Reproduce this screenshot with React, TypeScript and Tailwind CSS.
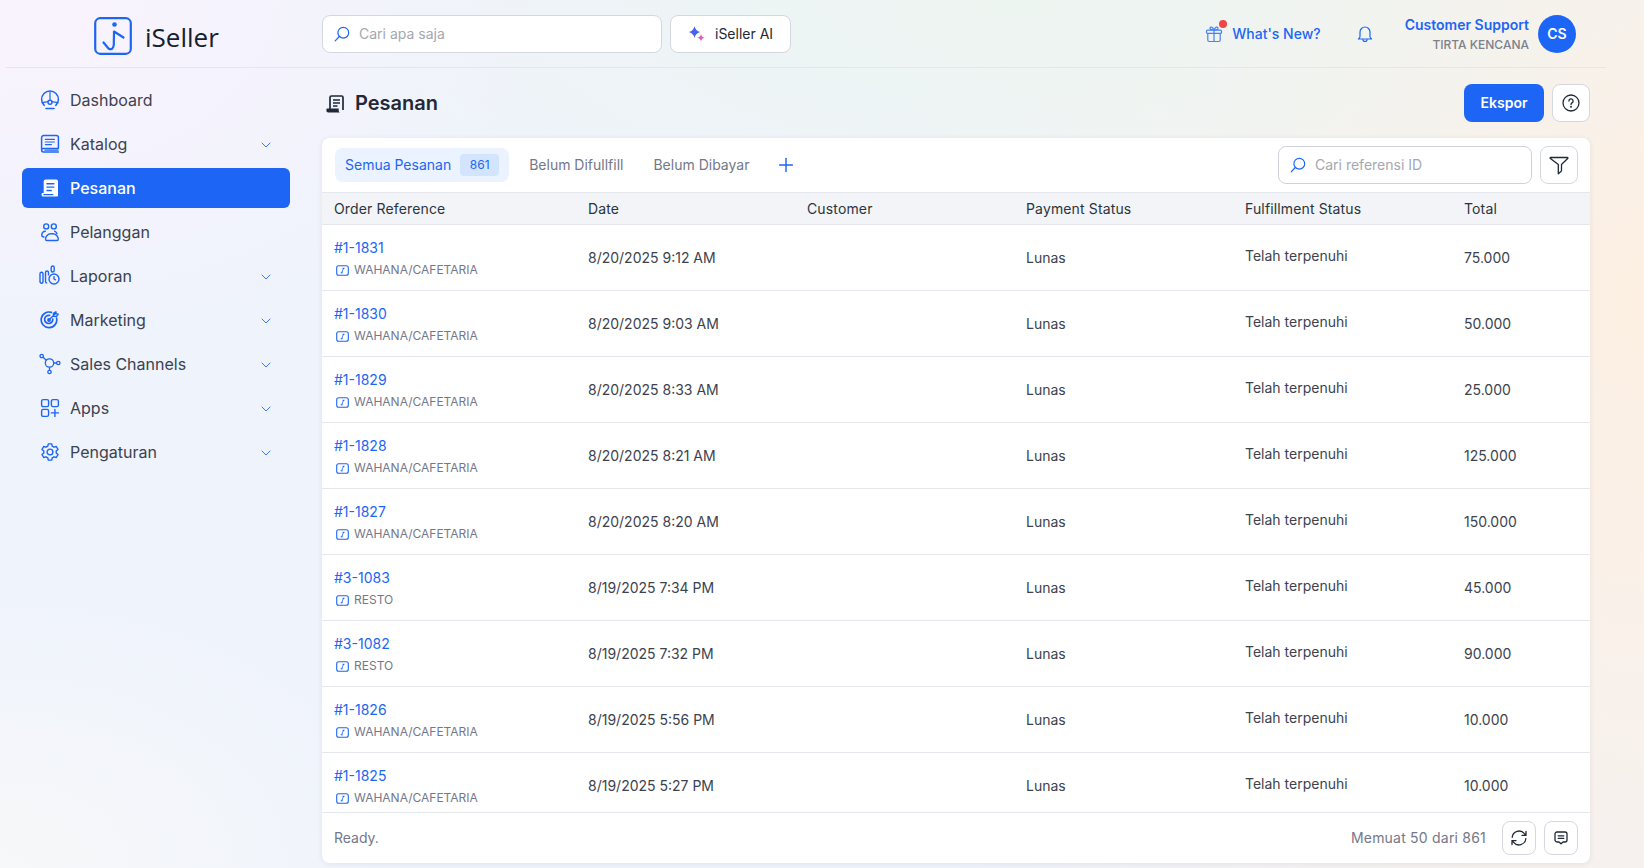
import { ChevronDown, Plus } from 'lucide-react'
import type { ReactNode } from 'react'

const BLUE = '#1d66f5'

function Ico({ children, size = 20, className = '' }: { children: ReactNode; size?: number; className?: string }) {
  return (
    <svg width={size} height={size} viewBox="0 0 20 20" fill="none" stroke="currentColor" strokeWidth={1.4} strokeLinecap="round" strokeLinejoin="round" className={`shrink-0 ${className}`}>
      {children}
    </svg>
  )
}

const NAV = [
  { label: 'Dashboard', icon: 'dash' },
  { label: 'Katalog', icon: 'book', more: true },
  { label: 'Pesanan', icon: 'order', active: true },
  { label: 'Pelanggan', icon: 'people' },
  { label: 'Laporan', icon: 'report', more: true },
  { label: 'Marketing', icon: 'target', more: true },
  { label: 'Sales Channels', icon: 'channels', more: true },
  { label: 'Apps', icon: 'apps', more: true },
  { label: 'Pengaturan', icon: 'gear', more: true },
]

const ORDERS = [
  ['#1-1831', 'WAHANA/CAFETARIA', '8/20/2025 9:12 AM', '75.000'],
  ['#1-1830', 'WAHANA/CAFETARIA', '8/20/2025 9:03 AM', '50.000'],
  ['#1-1829', 'WAHANA/CAFETARIA', '8/20/2025 8:33 AM', '25.000'],
  ['#1-1828', 'WAHANA/CAFETARIA', '8/20/2025 8:21 AM', '125.000'],
  ['#1-1827', 'WAHANA/CAFETARIA', '8/20/2025 8:20 AM', '150.000'],
  ['#3-1083', 'RESTO', '8/19/2025 7:34 PM', '45.000'],
  ['#3-1082', 'RESTO', '8/19/2025 7:32 PM', '90.000'],
  ['#1-1826', 'WAHANA/CAFETARIA', '8/19/2025 5:56 PM', '10.000'],
  ['#1-1825', 'WAHANA/CAFETARIA', '8/19/2025 5:27 PM', '10.000'],
]

function NavIcon({ name }: { name: string }) {
  switch (name) {
    case 'dash':
      return (
        <Ico>
          <path d="M4.2 15.4A8.4 8.4 0 1 1 15.8 15.4" strokeWidth={1.5} />
          <path d="M2.2 12.6 8 11.6M17.8 12.6 12 11.6M10 2v7.6" strokeWidth={1.2} />
          <circle cx="10" cy="12.2" r="2" />
          <path d="M6 18.4h8" strokeWidth={1.5} />
        </Ico>
      )
    case 'book':
      return (
        <Ico>
          <path d="M1.6 15.8V3.6a2 2 0 0 1 2-2h12.8a2 2 0 0 1 2 2v10.8H3.3a1.7 1.7 0 0 0-1.7 1.7 1.900 1.900 0 0 0 1.900 1.900h14.900" strokeWidth={1.5} />
          <path d="M5.4 5.4h9M5.4 8h9M5.4 10.600h6M5 16.200h13" strokeWidth={1.2} />
        </Ico>
      )
    case 'order':
      return (
        <svg width="20" height="20" viewBox="0 0 20 20" className="shrink-0">
          <path fill="currentColor" fillRule="evenodd" d="M5.5 1.5h10.700a1.800 1.800 0 0 1 1.800 1.800v14.400a.8.8 0 0 1-.8.8H3.200a1.600 1.600 0 0 1-1.600-1.600v-1.300c0-.4.300-.7.700-.7h1.400V3.300a1.800 1.800 0 0 1 1.800-1.800ZM6.400 5v1.400h8V5h-8Zm0 3.400v1.400h8V8.400h-8Zm0 3.400v1.400h5.400v-1.400H6.400ZM3.400 16v.9c0 .2.100.3.300.3h9.800a2 2 0 0 1-.3-1.200H3.400Z" />
        </svg>
      )
    case 'people':
      return (
        <Ico>
          <circle cx="6.2" cy="4.4" r="2.5" />
          <circle cx="13.8" cy="4.4" r="2.5" />
          <path d="M5.4 9.2A3.600 3.600 0 0 0 1.800 13c0 1.300 1 2 2.200 2" />
          <path d="M14.600 9.200c1.500.8 2.200 1.500 2.400 2.600" />
          <path d="M6.800 18.500h10.200c.8 0 1.300-.5 1.300-1.200 0-2.800-2.500-5.500-5.500-5.500h-2c-3 0-5.300 2.600-5.300 5.400 0 .7.400 1.300 1.300 1.300Z" />
        </Ico>
      )
    case 'report':
      return (
        <svg width="22" height="22" viewBox="0 0 22 22" fill="none" stroke="currentColor" strokeWidth={1.4} className="shrink-0 -ml-px">
          <rect x="1" y="7.2" width="3" height="11" rx="1.5" />
          <path d="M8.200 18c-1.100 0-1.700-.7-1.700-1.600V7.500C6.500 6.500 7.200 6 8 6s1.500.5 1.500 1.500v3" />
          <rect x="12.200" y="1" width="3" height="6" rx="1.5" />
          <circle cx="15" cy="14" r="5" />
          <path d="M15 11.300V14l1.800 1.200" />
        </svg>
      )
    case 'target':
      return (
        <Ico>
          <path d="M16.600 8.200a7.800 7.800 0 1 1-5.200-5.800" strokeWidth={1.7} />
          <path d="M12.800 9a4.100 4.100 0 1 1-3.200-3.600" strokeWidth={1.7} />
          <circle cx="9" cy="10" r="1.2" fill="currentColor" />
          <path d="m9.400 9.600 6-6M13.400 3.400l.2 2.900 2.900.2 1.700-2.400-2-.3-.3-2-2.500 1.600Z" />
        </Ico>
      )
    case 'channels':
      return (
        <svg width="22" height="22" viewBox="0 0 22 22" fill="none" stroke="currentColor" strokeWidth={1.3} className="shrink-0 -ml-px">
          <circle cx="10.5" cy="10" r="4.2" />
          <circle cx="2.7" cy="3" r="1.7" />
          <circle cx="19.3" cy="10" r="1.7" />
          <circle cx="10.5" cy="19" r="1.7" />
          <path d="m4 4.200 3.400 3M14.700 10h2.900M10.500 14.200v3.100" />
        </svg>
      )
    case 'apps':
      return (
        <Ico>
          <rect x="1.6" y="1.6" width="7" height="7" rx="1.6" />
          <rect x="11.4" y="1.6" width="7" height="7" rx="1.6" />
          <rect x="1.6" y="11.4" width="7" height="7" rx="1.6" />
          <path d="M14.900 11.400v7M11.400 14.900h7" />
        </Ico>
      )
    default:
      return (
        <Ico>
          <circle cx="10" cy="10" r="2.9" />
          <path d="M8.300 1.900h3.400l.5 2.300 1.800 1 2.300-.7 1.700 2.900-1.800 1.600v2l1.800 1.600-1.700 2.900-2.300-.7-1.800 1-.5 2.300H8.300l-.5-2.300-1.800-1-2.300.7-1.700-2.900 1.800-1.600V9L2 7.400l1.700-2.900 2.300.7 1.800-1 .5-2.300Z" />
        </Ico>
      )
  }
}

function SearchIcon() {
  return (
    <svg width="16" height="16" viewBox="0 0 16 16" fill="none" stroke={BLUE} strokeWidth={1.2} strokeLinecap="round" className="shrink-0">
      <circle cx="9.3" cy="6.7" r="5.4" />
      <path d="M5.300 10.500 1.200 14.800" />
    </svg>
  )
}

function ChannelTag() {
  return (
    <svg width="13" height="13" viewBox="0 0 13 13" fill="none" stroke={BLUE} className="shrink-0">
      <rect x="0.7" y="1.8" width="11.6" height="9.4" rx="2" strokeWidth={1.1} />
      <path d="M7.600 4.300 6.400 6.800l-.5 2M5 8.800h1.100M6.900 4.300h1.200" strokeWidth={0.9} strokeLinecap="round" />
    </svg>
  )
}

export default function App() {
  return (
    <div
      className="h-[868px] w-[1644px] overflow-hidden text-[#2b3440] bg-[radial-gradient(420px_280px_at_0%_100%,#f7f8f9,transparent),radial-gradient(560px_360px_at_0%_0%,#faf3fe,transparent),radial-gradient(760px_300px_at_62%_0%,#edf5f1,transparent),radial-gradient(780px_1200px_at_100%_35%,#fdf0e3,transparent),linear-gradient(#eff3fc,#eff3fc)]"
      style={{ fontFamily: 'Inter, "Liberation Sans", sans-serif' }}
    >
      <header className="ml-[6px] flex h-[68px] w-[1600px] items-center border-b border-[#e3e6ee]">
        <div className="mt-1 flex w-[316px] items-center pl-[88px]">
          <svg width="38" height="38" viewBox="0 0 38 38" fill="none" stroke={BLUE} className="shrink-0">
            <rect x="1.2" y="1.2" width="35.6" height="35.6" rx="5" strokeWidth={2.2} />
            <circle cx="20.5" cy="7.5" r="2.3" fill={BLUE} stroke="none" />
            <path d="M9.500 25.500 14.500 31.500C17.500 33.500 19.700 31 19.800 27.500L20 14.500 29.500 20.500" strokeWidth={2.2} strokeLinecap="round" strokeLinejoin="round" />
          </svg>
          <span className="ml-[13px] mt-[3px] text-[26px] font-medium leading-none text-[#15202e]" style={{ fontFamily: '"Open Sans", sans-serif' }}>iSeller</span>
        </div>
        <div className="flex h-[38px] w-[340px] items-center gap-[9px] rounded-lg border border-[#d5d7e0] bg-white pl-[11px]">
          <SearchIcon />
          <span className="text-sm text-[#a4a8b1]">Cari apa saja</span>
        </div>
        <div className="ml-2 flex h-[38px] w-[121px] items-center gap-[9px] rounded-lg border border-[#d5d7e0] bg-white pl-[17px] text-sm text-[#1f2937]">
          <svg width="18" height="18" viewBox="0 0 18 18" className="shrink-0">
            <path d="M6.500 1.200c.9 3.200 2.300 4.700 5.600 5.900-3.300 1.200-4.700 2.700-5.600 5.900-.9-3.200-2.300-4.700-5.600-5.900 3.300-1.200 4.700-2.700 5.600-5.900Z" fill="#4a63f0" />
            <path d="M13 9c.5 2.300 1.300 3.100 3.700 3.800-2.400.7-3.200 1.500-3.700 3.800-.5-2.300-1.300-3.100-3.700-3.800 2.400-.7 3.200-1.500 3.700-3.800Z" fill="#e25bb5" />
          </svg>
          iSeller AI
        </div>
        <div className="ml-auto flex items-center">
          <div className="relative">
            <svg width="18" height="18" viewBox="0 0 18 18" fill="none" stroke={BLUE} strokeWidth={1.2} strokeLinejoin="round" className="opacity-80">
              <rect x="1.5" y="5.2" width="15" height="3.2" rx="1" />
              <path d="M2.800 8.400V15a1.500 1.500 0 0 0 1.500 1.500h9.400a1.500 1.500 0 0 0 1.500-1.500V8.400M9 5.200v11.300M9 5.200C7 5.200 5 4.500 5 3s3-1.500 4 2.200Zm0 0c2 0 4-.7 4-2.200s-3-1.500-4 2.200Z" />
            </svg>
            <span className="absolute -right-[4px] -top-[5px] h-2 w-2 rounded-full bg-[#ef4444]" />
          </div>
          <span className="ml-[9px] text-sm font-medium text-[#1d66f5]">What's New?</span>
          <svg width="16" height="18" viewBox="0 0 16 18" fill="none" stroke={BLUE} strokeWidth={1.2} strokeLinejoin="round" strokeLinecap="round" className="ml-[36px]">
            <path d="M3 7a5 5 0 0 1 10 0v4.500c0 1 .6 1.800 1.600 2.500H1.400C2.400 13.300 3 12.500 3 11.500V7Z" />
            <path d="M6 14.500a2 2 0 0 0 4 0" />
          </svg>
          <div className="ml-[32px] flex flex-col items-end">
            <span className="text-sm font-semibold leading-[19px] text-[#1d66f5]">Customer Support</span>
            <span className="mt-[2px] text-xs font-medium leading-[17px] text-[#7c818c]">TIRTA KENCANA</span>
          </div>
          <div className="ml-[9px] mr-[30px] flex h-[38px] w-[38px] items-center justify-center rounded-full bg-[#1d66f5] text-sm font-semibold text-white">CS</div>
        </div>
      </header>

      <div className="flex">
        <nav className="flex w-[322px] shrink-0 flex-col gap-1 pl-[22px] pr-[32px] pt-3">
          {NAV.map((item) => (
            <div
              key={item.label}
              className={`flex h-10 items-center rounded-md pl-[18px] pr-[16px] ${item.active ? 'bg-[#1d66f5] text-white' : 'text-[#3c424e]'}`}
            >
              <span className={`flex w-[30px] ${item.active ? 'text-white' : 'text-[#1d66f5]'}`}>
                <NavIcon name={item.icon} />
              </span>
              <span className={`text-base ${item.active ? 'font-medium' : ''}`}>{item.label}</span>
              {item.more && <ChevronDown size={16} strokeWidth={1.3} className="ml-auto mt-px text-[#1d66f5]" />}
            </div>
          ))}
        </nav>

        <main className="w-[1268px] shrink-0 pt-4">
          <div className="mb-4 flex h-[38px] items-center">
            <svg width="20" height="20" viewBox="0 0 20 20" fill="none" className="ml-[3px] mt-[2px] shrink-0 text-[#1f2937]">
              <path d="M5 15V3.400C5 2.600 5.600 2 6.400 2h10.200c.8 0 1.400.6 1.400 1.400V16" stroke="currentColor" strokeWidth={1.7} />
              <path d="M8 6h7M8 9h7M8 12h4.500" stroke="currentColor" strokeWidth={1.5} />
              <path d="M2.500 14.500h11.200v2.200c0 .8.400 1.300 1.100 1.800H3.400c-1.300 0-2-.8-2-2v-1c0-.6.400-1 1.100-1Z" fill="currentColor" />
            </svg>
            <h1 className="ml-[10px] text-xl font-semibold text-[#1f2937]">Pesanan</h1>
            <button className="ml-auto h-[38px] w-20 rounded-lg bg-[#1d66f5] text-sm font-semibold text-white">Ekspor</button>
            <button className="ml-2 flex h-[38px] w-[38px] items-center justify-center rounded-lg border border-[#d5d7e0] bg-white">
              <svg width="18" height="18" viewBox="0 0 18 18" fill="none" stroke="#1f2937" strokeWidth={1.3} strokeLinecap="round">
                <circle cx="9" cy="9" r="8" />
                <path d="M6.900 7a2.100 2.100 0 1 1 3.100 1.900c-.7.4-1 .8-1 1.500" />
                <circle cx="9" cy="12.8" r=".4" />
              </svg>
            </button>
          </div>

          <div className="flex h-[725px] flex-col overflow-hidden rounded-lg bg-white shadow-[0_1px_6px_rgba(30,40,80,0.08)]">
            <div className="flex h-[54px] shrink-0 items-center pl-[13px] pr-3">
              <div className="flex h-[34px] items-center rounded-lg bg-[#eaf3ff] pl-[10px] pr-[10px] text-sm text-[#1d66f5]">
                Semua Pesanan
                <span className="ml-[9px] flex h-[22px] w-[39px] items-center justify-center rounded bg-[#d3e5fe] text-xs">861</span>
              </div>
              <span className="ml-5 text-sm text-[#73788a]">Belum Difullfill</span>
              <span className="ml-[30px] text-sm text-[#73788a]">Belum Dibayar</span>
              <Plus size={22} strokeWidth={1.6} className="ml-[26px] text-[#1d66f5]" />
              <div className="ml-auto flex h-[38px] w-[254px] items-center gap-[9px] rounded-lg border border-[#cfd1dc] pl-[11px]">
                <SearchIcon />
                <span className="text-sm text-[#a4a8b1]">Cari referensi ID</span>
              </div>
              <button className="ml-2 flex h-[38px] w-[38px] items-center justify-center rounded-lg border border-[#d5d7e0]">
                <svg width="20" height="20" viewBox="0 0 20 20" fill="none" stroke="#1f2937" strokeWidth={1.3} strokeLinejoin="round">
                  <path d="M1.500 2.500h17c.4 0 .6.400.4.700l-6.400 6.300v5.700c0 .5-.1.800-.6 1.300l-2.600 2.300V9.500L1.100 3.200c-.2-.3 0-.7.400-.7Z" />
                </svg>
              </button>
            </div>

            <div className="grid h-[33px] shrink-0 grid-cols-[254px_219px_219px_219px_219px_1fr] items-center border-y border-[#e4e7ec] bg-[#f2f4f7] pl-3 text-sm tracking-[0.01em] text-[#2b3440]">
              <span>Order Reference</span>
              <span>Date</span>
              <span>Customer</span>
              <span>Payment Status</span>
              <span>Fulfillment Status</span>
              <span>Total</span>
            </div>

            <div className="min-h-0 flex-1 overflow-hidden">
              {ORDERS.map(([ref, channel, date, total]) => (
                <div key={ref} className="grid h-[66px] grid-cols-[254px_219px_219px_219px_219px_1fr] items-center border-b border-[#e4e7ec] pl-3 text-sm text-[#3c424e]">
                  <div className="pt-px">
                    <div className="text-sm leading-[20px] text-[#1d66f5]">{ref}</div>
                    <div className="mt-1 flex items-center gap-[5px] text-xs leading-4 text-[#73788a]">
                      <span className="ml-[2px]"><ChannelTag /></span>
                      {channel}
                    </div>
                  </div>
                  <span className="pt-px">{date}</span>
                  <span />
                  <span className="pt-px">Lunas</span>
                  <span className="-mt-[4px]">Telah terpenuhi</span>
                  <span className="pt-px">{total}</span>
                </div>
              ))}
            </div>

            <div className="flex h-[51px] shrink-0 items-center border-t border-[#e4e7ec] pl-3 pr-3 text-sm text-[#73788a]">
              <span>Ready.</span>
              <span className="ml-auto tracking-[0.015em]">Memuat 50 dari 861</span>
              <button className="ml-4 flex h-[34px] w-[34px] items-center justify-center rounded-lg border border-[#d5d7e0]">
                <svg width="18" height="18" viewBox="0 0 18 18" fill="none" stroke="#1f2937" strokeWidth={1.3} strokeLinecap="round" strokeLinejoin="round">
                  <path d="M2.200 8.300A6.900 6.900 0 0 1 14.400 4.600L16 6.400M16 2.400v4h-4" />
                  <path d="M15.800 9.700A6.900 6.900 0 0 1 3.600 13.400L2 11.600M2 15.600v-4h4" />
                </svg>
              </button>
              <button className="ml-2 flex h-[34px] w-[34px] items-center justify-center rounded-lg border border-[#d5d7e0]">
                <svg width="16" height="16" viewBox="0 0 16 16" fill="none" stroke="#1f2937" strokeWidth={1.3} strokeLinecap="round" strokeLinejoin="round">
                  <path d="M4 2h8a2 2 0 0 1 2 2v6a2 2 0 0 1-2 2h-2l-2 1.800L6 12H4a2 2 0 0 1-2-2V4a2 2 0 0 1 2-2Z" />
                  <path d="M5.200 5.800h5.600M5.200 8.300h5.600" />
                </svg>
              </button>
            </div>
          </div>
        </main>
      </div>
    </div>
  )
}
